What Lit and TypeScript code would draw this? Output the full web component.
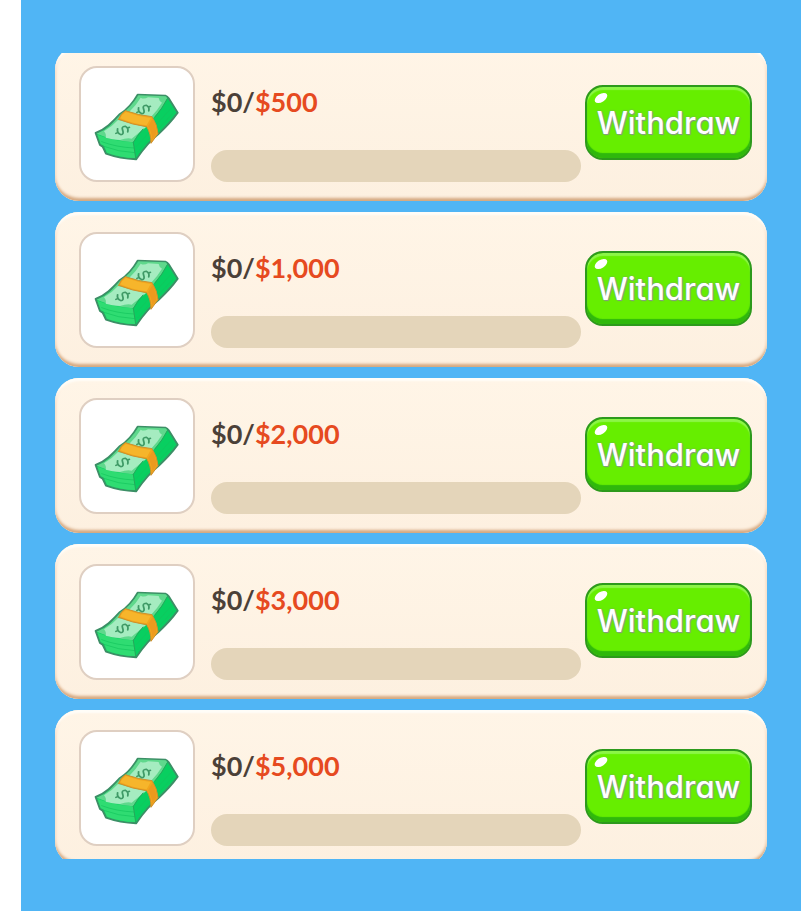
import { LitElement, html, css, svg } from "lit";
import { customElement, property } from "lit/decorators.js";

const dollar = svg`
  <path d="M9 -8Q1 -15 -7 -10Q-11 -2 0 0Q11 2 8 9Q0 15 -9 8M0 -17V-12M0 12V17" fill="none" stroke="#3f9a66" stroke-width="4"/>
`;

const cash = svg`
  <g stroke-linejoin="round" stroke-linecap="round">
    <path d="M77 222Q100 213 116 199Q134 183 150 165Q181 146 203 107L286 110Q292 112 296 118L323 161Q300 193 266 224Q231 252 198 301Q150 299 108 284L98 263L90 258Z" fill="#10d364" stroke="#3c8f66" stroke-width="6"/>
    <path d="M80 224Q104 215 120 200Q136 184 152 166Q183 146 205 109L287 112L292 118Q276 150 248 180Q215 206 190 250Q130 245 80 224Z" fill="#5fd88c"/>
    <path d="M82 227Q130 246 190 250L197 297Q150 296 111 281L102 260L92 255Z" fill="#2fdc72"/>
    <path d="M190 249Q215 206 248 180Q276 150 292 119L319 161Q290 196 262 222Q228 252 198 297Z" fill="#08cf60"/>
    <path d="M102 217Q124 205 144 183L228 205Q208 220 185 239Q170 236 150 243Q126 242 107 236Q110 226 102 217Z" fill="#a5ecc0"/>
    <path d="M178 158Q200 137 212 116Q222 122 234 115L266 117Q268 128 276 131Q262 154 243 174Z" fill="#a5ecc0"/>
    <path d="M95 248Q140 265 192 267M101 262Q145 279 194 281M203 278Q250 226 308 163M200 262Q245 212 304 147" fill="none" stroke="#12c45c" stroke-width="2"/>
    <path d="M190 250L197 297M190 250Q202 229 219 210M255 174Q278 147 292 119" fill="none" stroke="#25a85b" stroke-width="3"/>
    <path d="M146 181Q152 163 166 155Q205 169 246 173Q262 197 264 224L243 253Q243 224 230 203Q188 198 146 181Z" fill="#f2a51c" stroke="#d08f2c" stroke-width="3"/>
    <path d="M151 178Q157 165 168 159Q205 173 242 177L230 199Q188 194 151 178Z" fill="#f6b52b"/>
    <path d="M234 202L247 181Q258 200 259 223L247 242Q246 219 234 202Z" fill="#ec9a1e"/>
    <g transform="translate(158 214) scale(1.35 1.15) rotate(62)">${dollar}</g>
    <g transform="translate(221 151) scale(1.35 1.15) rotate(62)">${dollar}</g>
  </g>
`;

@customElement("reward-card")
class RewardCard extends LitElement {
  @property({ type: Number }) earned = 0;
  @property({ type: Number }) goal = 0;

  static styles = css`
    :host {
      display: flex;
      align-items: flex-start;
      box-sizing: border-box;
      padding: 20px 15px 19px 24px;
      border-radius: 24px;
      background: linear-gradient(#fff5e7, #fdf0e0);
      box-shadow:
        inset 0 -4px 3px -1px #d5a880,
        inset 0 3px 2px #fffdf8,
        inset 2px 0 2px #fbe6d0,
        inset -2px 0 2px #fbe6d0;
    }
    .thumb {
      flex: none;
      box-sizing: border-box;
      width: 116px;
      height: 116px;
      border: 2px solid #dfcfc2;
      border-radius: 18px;
      background: #fff;
    }
    .thumb svg {
      display: block;
      width: 100%;
      height: 100%;
    }
    .info {
      flex: 1;
      min-width: 0;
      height: 116px;
      box-sizing: border-box;
      margin: 0 4px 0 16px;
      padding-top: 18px;
      display: flex;
      flex-direction: column;
      justify-content: space-between;
    }
    .amount {
      font: 700 27px/36px Lato, "Open Sans", sans-serif;
      color: #4b4038;
      white-space: nowrap;
    }
    .goal {
      color: #e64a20;
    }
    progress {
      appearance: none;
      display: block;
      width: 100%;
      height: 32px;
      border: 0;
      border-radius: 16px;
      overflow: hidden;
      background: #e4d5ba;
    }
    progress::-webkit-progress-bar {
      background: #e4d5ba;
    }
    progress::-webkit-progress-value {
      background: #66ee00;
    }
    .withdraw {
      position: relative;
      flex: none;
      width: 167px;
      height: 75px;
      margin: 19px 0 0;
      padding: 0;
      border: 2px solid #2d9a1c;
      border-radius: 18px;
      background: #66ee00;
      box-shadow:
        inset 0 -5px 1px #2fb80c,
        inset 0 3px 1px #8cf548;
      color: #fff;
      font: 500 31px/40px Inter, Lato, sans-serif;
      font-feature-settings: "cv11";
      text-shadow: 0 0 2px #7d8a86, 1px 1px 1px #8d9a86;
      white-space: nowrap;
      cursor: pointer;
    }
    .withdraw::before {
      content: "";
      position: absolute;
      left: 7px;
      top: 7px;
      width: 14px;
      height: 8px;
      border-radius: 50%;
      background: #fff;
      transform: rotate(-32deg);
    }
  `;

  render() {
    const goal = "$" + this.goal.toLocaleString("en-US");
    return html`
      <div class="thumb">
        <svg viewBox="33 27 336 336" aria-hidden="true">${cash}</svg>
      </div>
      <div class="info">
        <label class="amount" for="bar">$${this.earned}/<span class="goal">${goal}</span></label>
        <progress id="bar" max=${this.goal} value=${this.earned}></progress>
      </div>
      <button class="withdraw" type="button">Withdraw</button>
    `;
  }
}

@customElement("app-root")
class AppRoot extends LitElement {
  private goals = [500, 1000, 2000, 3000, 5000];

  static styles = css`
    :host {
      display: block;
      background: #fff;
    }
    .screen {
      box-sizing: border-box;
      display: flex;
      height: 100vh;
      margin: 0 4px 0 21px;
      padding: 53px 34px 52px;
      background: #50b5f5;
    }
    .viewport {
      flex: 1;
      min-width: 0;
      overflow: hidden;
      border-radius: 6px 6px 0 0;
    }
    .list {
      display: flex;
      flex-direction: column;
      gap: 11px;
      margin: -7px 0 0;
      padding: 0;
      list-style: none;
    }
  `;

  render() {
    return html`
      <main class="screen">
        <div class="viewport">
          <ul class="list">
            ${this.goals.map(
              (goal) => html`<li><reward-card .goal=${goal}></reward-card></li>`
            )}
          </ul>
        </div>
      </main>
    `;
  }
}
